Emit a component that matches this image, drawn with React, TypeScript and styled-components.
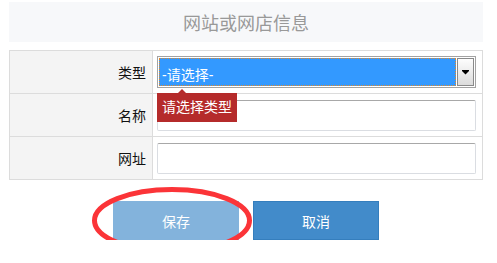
import { useState } from 'react'
import styled, { createGlobalStyle } from 'styled-components'

const GlobalStyle = createGlobalStyle`
  html, body {
    margin: 0;
    padding: 0;
    background: #fff;
    font-family: "Liberation Sans", "Noto Sans CJK SC", sans-serif;
  }
`

const Page = styled.div`
  position: relative;
  width: 474px;
  padding: 2px 0 0 9px;
`

const Header = styled.div`
  height: 40px;
  background: #f7f8fa;
  color: #999;
  font-size: 18px;
  display: flex;
  align-items: center;
  justify-content: center;
`

const Table = styled.div`
  margin-top: 8px;
  border: 1px solid #dcdcdc;
  display: grid;
  grid-template-columns: 143px 1fr;
`

const Label = styled.div<{ $last?: boolean }>`
  height: 42px;
  background: #f4f4f4;
  border-right: 1px solid #dcdcdc;
  border-bottom: ${p => (p.$last ? 'none' : '1px solid #dcdcdc')};
  display: flex;
  align-items: center;
  justify-content: flex-end;
  padding-right: 6px;
  font-size: 14px;
  color: #111;
`

const Field = styled.div<{ $last?: boolean }>`
  position: relative;
  height: 42px;
  border-bottom: ${p => (p.$last ? 'none' : '1px solid #dcdcdc')};
  display: flex;
  align-items: center;
  padding-left: 4px;
`

const TextInput = styled.input`
  box-sizing: border-box;
  width: 319px;
  height: 31px;
  border: 1px solid #dadde2;
  border-top-color: #a8a8a8;
  border-radius: 2px;
  outline: none;
  margin-top: 1px;
`

const SelectBox = styled.div`
  box-sizing: border-box;
  width: 319px;
  height: 32px;
  border: 1px solid #a3a3a3;
  padding: 1px;
  display: flex;
  background: #fff;
`

const SelectValue = styled.div`
  flex: 1;
  background: #3399ff;
  border: 1px dotted #e08a2c;
  color: #fff;
  font-size: 14px;
  line-height: 18px;
  display: flex;
  align-items: flex-end;
  padding: 0 0 1px 2px;
`

const SelectButton = styled.div`
  box-sizing: border-box;
  width: 17px;
  margin-left: 1px;
  border: 1px solid #8a8a8a;
  background: linear-gradient(#fdfdfd, #dcdcdc);
  display: flex;
  align-items: center;
  justify-content: center;
`

const Tip = styled.div`
  position: absolute;
  left: 4px;
  top: 42px;
  z-index: 2;
  background: #b52b2b;
  color: #fff;
  font-size: 14px;
  padding: 5px 5px 6px;
  line-height: 18px;
  &::before {
    content: '';
    position: absolute;
    left: 21px;
    top: -4px;
    border-left: 4px solid transparent;
    border-right: 4px solid transparent;
    border-bottom: 4px solid #b52b2b;
  }
`

const Actions = styled.div`
  display: flex;
  justify-content: center;
  gap: 14px;
  margin-top: 21px;
`

const Btn = styled.button<{ $muted?: boolean }>`
  width: 126px;
  height: 39px;
  border: 1px solid ${p => (p.$muted ? '#83b3dc' : '#357ebd')};
  background: ${p => (p.$muted ? '#83b3dc' : '#428bca')};
  color: #fff;
  font-size: 14px;
  font-family: inherit;
  cursor: pointer;
`

const Mark = styled.svg`
  position: absolute;
  left: 90px;
  top: 185px;
  pointer-events: none;
`

export default function App() {
  const [name, setName] = useState('')
  const [url, setUrl] = useState('')

  return (
    <Page>
      <GlobalStyle />
      <Header>网站或网店信息</Header>
      <Table>
        <Label>类型</Label>
        <Field>
          <SelectBox>
            <SelectValue>-请选择-</SelectValue>
            <SelectButton>
              <svg width="7" height="5" viewBox="0 0 7 5">
                <rect x="0" y="0" width="7" height="1" fill="#000" />
                <path d="M0 1 L7 1 L3.5 4.5 Z" fill="#000" />
              </svg>
            </SelectButton>
          </SelectBox>
          <Tip>请选择类型</Tip>
        </Field>
        <Label>名称</Label>
        <Field>
          <TextInput value={name} onChange={e => setName(e.target.value)} />
        </Field>
        <Label $last>网址</Label>
        <Field $last>
          <TextInput value={url} onChange={e => setUrl(e.target.value)} />
        </Field>
      </Table>
      <Actions>
        <Btn $muted>保存</Btn>
        <Btn>取消</Btn>
      </Actions>
      <Mark width="164" height="72" viewBox="0 0 164 72">
        <ellipse cx="82" cy="35.5" rx="77.5" ry="31" fill="none" stroke="#fb3438" strokeWidth="5" />
      </Mark>
    </Page>
  )
}
